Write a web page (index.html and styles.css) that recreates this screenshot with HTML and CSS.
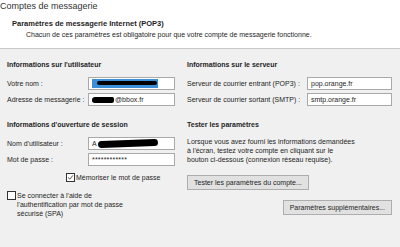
FILE: index.html
```html
<!DOCTYPE html>
<html lang="fr">
<head>
    <meta charset="UTF-8">
    <title>Comptes de messagerie</title>
    <link rel="stylesheet" href="styles.css">
</head>
<body>
    <header class="head">
        <div class="win-title">Comptes de messagerie</div>
        <h1>Paramètres de messagerie Internet (POP3)</h1>
        <p class="intro">Chacun de ces paramètres est obligatoire pour que votre compte de messagerie fonctionne.</p>
    </header>

    <main class="panes">
        <section class="pane pane-left">
            <h2>Informations sur l'utilisateur</h2>
            <div class="field">
                <label>Votre nom :</label>
                <div class="box"><span class="sel"><span class="blot blot-long"></span></span></div>
            </div>
            <div class="field">
                <label>Adresse de messagerie :</label>
                <div class="box"><span class="blot blot-mail"></span>@bbox.fr</div>
            </div>

            <h2 class="second">Informations d'ouverture de session</h2>
            <div class="field">
                <label>Nom d'utilisateur :</label>
                <div class="box">A<span class="blot blot-user"></span></div>
            </div>
            <div class="field">
                <label>Mot de passe :</label>
                <div class="box pwd">************</div>
            </div>
            <div class="check check-remember">
                <span class="tick on">
                    <svg width="9" height="9" viewBox="0 0 9 9"><path d="M1.5 4.5 L3.6 6.6 L7.6 1.8" fill="none" stroke="#222" stroke-width="1"/></svg>
                </span>
                <span>Mémoriser le mot de passe</span>
            </div>
            <div class="check check-spa">
                <span class="tick"></span>
                <span>Se connecter à l'aide de<br>l'authentification par mot de passe<br>sécurisé (SPA)</span>
            </div>
        </section>

        <section class="pane pane-right">
            <h2>Informations sur le serveur</h2>
            <div class="field">
                <label>Serveur de courrier entrant (POP3) :</label>
                <div class="box">pop.orange.fr</div>
            </div>
            <div class="field">
                <label>Serveur de courrier sortant (SMTP) :</label>
                <div class="box">smtp.orange.fr</div>
            </div>

            <h2 class="second">Tester les paramètres</h2>
            <p class="help">Lorsque vous avez fourni les informations demandées<br>à l'écran, testez votre compte en cliquant sur le<br>bouton ci-dessous (connexion réseau requise).</p>
            <button class="btn">Tester les paramètres du compte...</button>
            <div class="more">
                <button class="btn">Paramètres supplémentaires...</button>
            </div>
        </section>
    </main>
</body>
</html>
```

FILE: styles.css
```css
body {
    margin: 0;
    background-color: #f0f0f0;
    font-family: "Liberation Sans", Arial, sans-serif;
    font-size: 7px;
    color: #1e1e1e;
    width: 400px;
    height: 247px;
    overflow: hidden;
}
.head {
    background-color: #fff;
    height: 49px;
    border-bottom: 1px solid #c9c9c9;
    box-sizing: border-box;
    padding-top: 1px;
}
.win-title {
    font-size: 9px;
    line-height: 11px;
    color: #333;
}
h1 {
    font-size: 7.5px;
    font-weight: bold;
    line-height: 10px;
    margin: 7px 0 0 12px;
}
.intro {
    margin: 1px 0 0 26px;
    line-height: 10px;
}
.panes {
    display: grid;
    grid-template-columns: 168px 205px;
    column-gap: 12px;
    padding: 11px 0 0 7px;
}
h2 {
    font-size: 7px;
    font-weight: bold;
    line-height: 9px;
    margin: 0 0 8px 0;
}
h2.second {
    margin-top: 14px;
}
.field {
    display: flex;
    align-items: center;
    margin-bottom: 3px;
}
.field label {
    flex: 0 0 81px;
}
.pane-right .field label {
    flex-basis: 120px;
}
.box {
    flex: 1;
    height: 13px;
    box-sizing: border-box;
    background-color: #fff;
    border: 1px solid #a9a9a9;
    padding: 0 3px;
    line-height: 11px;
    display: flex;
    align-items: center;
    white-space: nowrap;
}
.pwd {
    letter-spacing: 0.2px;
}
.sel {
    display: inline-block;
    width: 66px;
    height: 9px;
    background-color: #3b8ed8;
    position: relative;
}
.blot {
    display: inline-block;
    background-color: #000;
    border-radius: 4px;
}
.blot-long {
    position: absolute;
    left: 5px;
    top: 2px;
    width: 60px;
    height: 4px;
    border-radius: 3px;
}
.blot-mail {
    width: 22px;
    height: 6px;
    margin-right: 1px;
    border-radius: 6px 3px 4px 5px;
}
.blot-user {
    width: 60px;
    height: 7px;
    margin-left: 1px;
    transform: rotate(-2deg);
}
.check {
    display: flex;
    align-items: flex-start;
    line-height: 9px;
}
.check-remember {
    margin: 7px 0 0 59px;
}
.check-spa {
    margin-top: 9px;
}
.tick {
    flex: 0 0 auto;
    width: 9px;
    height: 9px;
    box-sizing: border-box;
    border: 1px solid #333;
    background-color: #fff;
    margin-right: 1px;
    display: flex;
    align-items: center;
    justify-content: center;
}
.tick svg {
    display: block;
}
.help {
    margin: 3px 0 0 0;
    line-height: 9px;
}
.btn {
    font-family: inherit;
    font-size: 7px;
    color: #1e1e1e;
    background-color: #e1e1e1;
    border: 1px solid #adadad;
    height: 15px;
    padding: 0 6px;
    margin-top: 11px;
    border-radius: 0;
}
.more {
    display: flex;
    justify-content: flex-end;
}
.more .btn {
    margin-top: 10px;
}
```
